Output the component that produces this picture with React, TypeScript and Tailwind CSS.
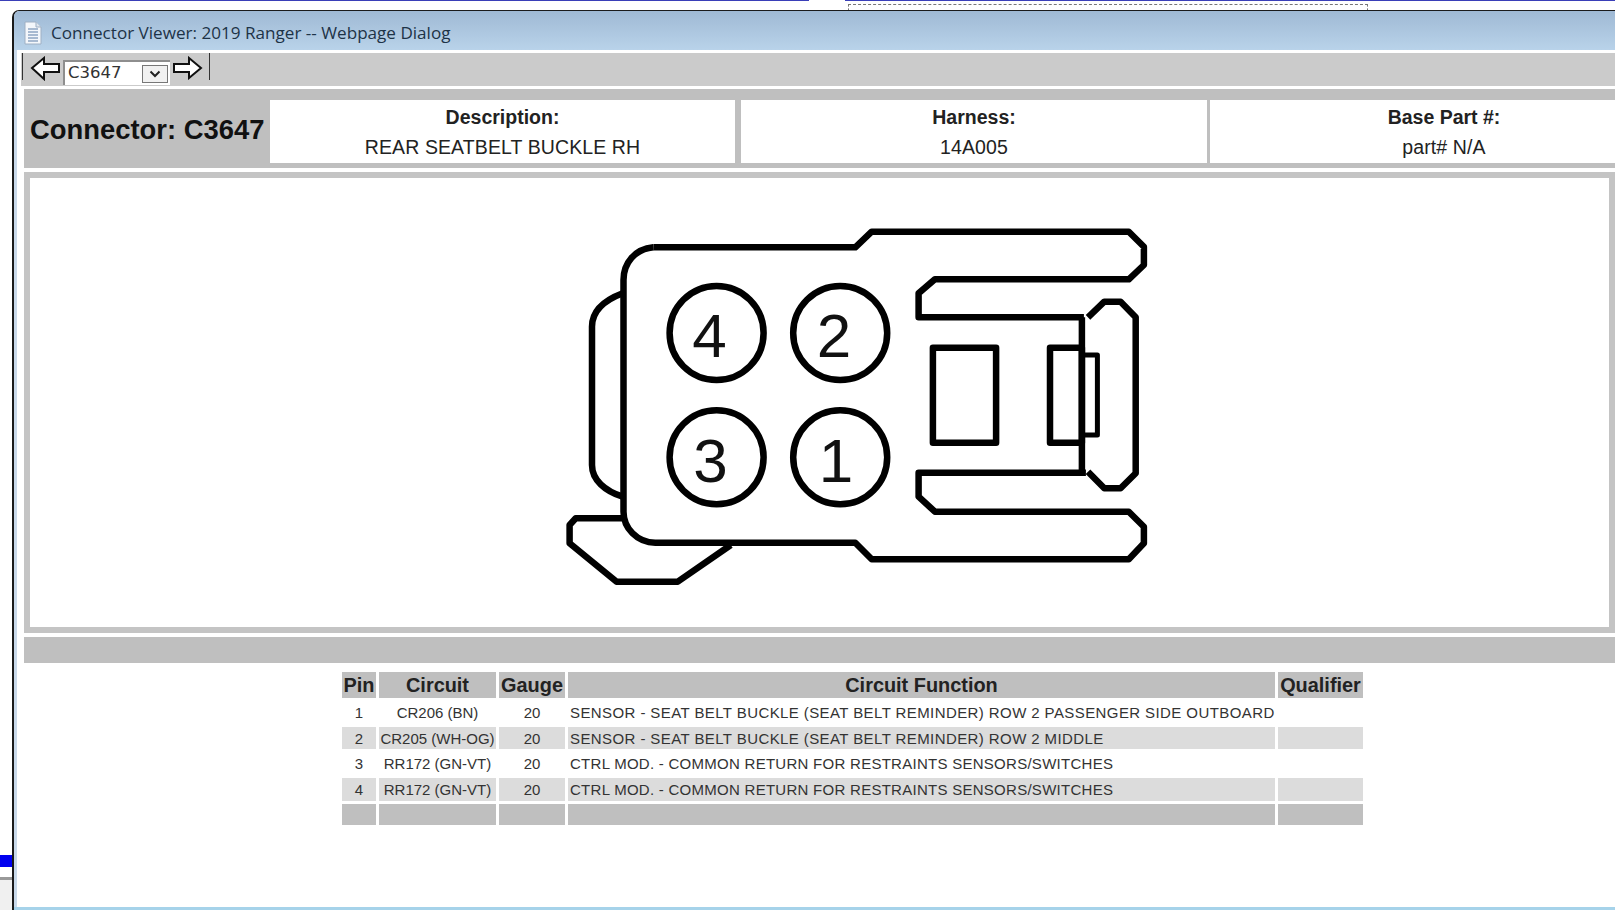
import React from 'react';

const rows = [
  ['1', 'CR206 (BN)', '20', 'SENSOR - SEAT BELT BUCKLE (SEAT BELT REMINDER) ROW 2 PASSENGER SIDE OUTBOARD'],
  ['2', 'CR205 (WH-OG)', '20', 'SENSOR - SEAT BELT BUCKLE (SEAT BELT REMINDER) ROW 2 MIDDLE'],
  ['3', 'RR172 (GN-VT)', '20', 'CTRL MOD. - COMMON RETURN FOR RESTRAINTS SENSORS/SWITCHES'],
  ['4', 'RR172 (GN-VT)', '20', 'CTRL MOD. - COMMON RETURN FOR RESTRAINTS SENSORS/SWITCHES'],
];

const InfoCell: React.FC<{ label: string; value: string; width: string }> = ({ label, value, width }) => (
  <div className={`${width} shrink-0 h-[63px] bg-white flex flex-col items-center justify-center text-[19.5px] leading-[30px] text-[#222]`}>
    <div className="font-bold">{label}</div>
    <div className="tracking-[0.1px]">{value}</div>
  </div>
);

const ConnectorDrawing: React.FC = () => (
  <svg width="640" height="390" viewBox="0 0 640 390" fill="none" stroke="#000" strokeWidth="6.5" strokeLinejoin="round">
    <path d="M114.3 37.3H316.3L332.7 21.7H589.8L604.9 36.7V55L589.8 69.3H395.9L379.6 83.3V107.3H544.9" />
    <path d="M114.3 37.3C96 39 84.5 53 84.5 70V301.7C84.5 318 98 332.7 116.3 332.7H316.3L332.7 349.3H589.8L604.9 333.3V316.7L589.8 301.7H395.9L379.6 286.7V262.7H546.9" />
    <path d="M542.9 107.3V262.7" />
    <path d="M549 107.3L565.3 91.7H581.6L596.7 107.3V263.3L581.6 278.3H565.3L549 261.7" />
    <rect x="393.9" y="137.7" width="63.2" height="95" />
    <rect x="511" y="137.7" width="31.9" height="95" />
    <rect x="542.9" y="145" width="15.5" height="80" strokeWidth="5" />
    <path d="M83.7 83.3C66 90 53 100 53 116.7V255C53 270 66 281 83.7 286.7" />
    <path d="M84.5 308.3H36.7L30.6 315V333.3L77.6 371.7H138.8L191.8 335" />
    <circle cx="177.6" cy="123" r="47" />
    <circle cx="301.2" cy="123" r="47" />
    <circle cx="177.6" cy="247.3" r="47" />
    <circle cx="301.2" cy="247.3" r="47" />
    <g fill="#111" stroke="none" fontSize="62" textAnchor="middle" style={{ fontFamily: '"Liberation Sans", sans-serif' }}>
      <text x="170.4" y="146.7">4</text>
      <text x="294.9" y="146.7">2</text>
      <text x="171.6" y="271.7">3</text>
      <text x="297" y="271.7">1</text>
    </g>
  </svg>
);

const App: React.FC = () => {
  return (
    <div className="relative w-[1615px] h-[910px] overflow-hidden bg-white font-['Liberation_Sans',sans-serif]">
      {/* stuff behind the dialog */}
      <div className="absolute left-0 top-0 w-[809px] h-px bg-[#3a3fb8]" />
      <div className="absolute left-[845px] right-0 top-0 h-px bg-[#3a3fb8]" />
      <div className="absolute left-[848px] top-[4px] w-[520px] h-[7px] border-t border-l border-r border-dashed border-[#777]" />
      <div className="absolute left-0 top-[855px] w-[12px] h-[12px] bg-[#0000f0]" />
      <div className="absolute left-0 top-[877px] w-[12px] h-[33px] bg-[#f0f0f0] border-t-[3px] border-[#999]" />

      {/* dialog window */}
      <div className="absolute left-[12px] top-[10px] w-[1603px] h-[900px] border-l-2 border-t border-[#1a1a1a] rounded-tl-[7px] overflow-hidden flex flex-col bg-white">
        <div className="h-[39px] shrink-0 bg-gradient-to-b from-[#9fb9d4] to-[#b9d3ea] flex items-center pl-[10px] pt-[4px] gap-[9px]">
          <svg width="18" height="24" viewBox="0 0 18 24" className="shrink-0">
            <path d="M1 1H12L17 6V23H1Z" fill="#f4f7fb" stroke="#9fb0c4" />
            <path d="M12 1V6H17" fill="#dfe6ee" stroke="#9fb0c4" />
            <path d="M4 8H14M4 11H14M4 14H14M4 17H14M4 20H14" stroke="#5d7fa8" strokeWidth="1.2" />
          </svg>
          <span className="text-[17.1px] text-[#1d3347] font-['Open_Sans',sans-serif] whitespace-nowrap">Connector Viewer: 2019 Ranger -- Webpage Dialog</span>
        </div>

        <div className="flex-1 flex min-h-0">
          <div className="w-[3px] shrink-0 bg-[#c9d9ea]" />
          <div className="flex-1 min-w-0 flex flex-col">
            {/* toolbar */}
            <div className="mt-[3px] ml-[4px] h-[33px] shrink-0 bg-[#cbcbcb] flex items-start">
              <div className="w-px h-[27px] bg-[#333] ml-px" />
              <svg width="30" height="25" viewBox="0 0 30 25" className="ml-[7px] mt-[3px] shrink-0" fill="#fff" stroke="#111" strokeWidth="2">
                <path d="M2 12L14 2V8H29V16H14V23Z" />
              </svg>
              <div className="ml-[3px] mt-[7px] w-[107px] h-[25px] bg-white border-t-2 border-l-2 border-[#8e8e8e] flex items-start relative">
                <span className="pl-[3px] text-[16.5px] leading-[22px] text-[#333] font-['DejaVu_Sans',sans-serif]">C3647</span>
                <div className="absolute left-[77px] top-[3px] w-[26px] h-[18px] border border-[#777] bg-[#f1f1f1] flex items-center justify-center">
                  <svg width="12" height="8" viewBox="0 0 12 8" fill="none" stroke="#222" strokeWidth="2">
                    <path d="M1.5 1.5L6 6L10.5 1.5" />
                  </svg>
                </div>
              </div>
              <svg width="30" height="24" viewBox="0 0 30 24" className="ml-[3px] mt-[3px] shrink-0" fill="#fff" stroke="#111" strokeWidth="2">
                <path d="M28 12L16 2V8H1V16H16V22Z" />
              </svg>
              <div className="w-px h-[27px] bg-[#333] ml-[6px]" />
            </div>

            {/* connector header */}
            <div className="mt-[3px] ml-[7px] h-[79px] shrink-0 bg-[#bfbfbf] flex items-start pt-[11px]">
              <div className="w-[246px] shrink-0 h-[60px] pl-[6px] flex items-center font-bold text-[27.4px] text-[#111] whitespace-nowrap">
                Connector: C3647
              </div>
              <InfoCell label="Description:" value="REAR SEATBELT BUCKLE RH" width="w-[465px] mr-[6px]" />
              <InfoCell label="Harness:" value="14A005" width="w-[466px] mr-[3px]" />
              <InfoCell label="Base Part #:" value="part# N/A" width="w-[468px]" />
            </div>

            {/* drawing */}
            <div className="mt-[4px] ml-[7px] h-[461px] shrink-0 border-[6px] border-[#c4c4c4] bg-white pl-[509px] pt-[32px]">
              <ConnectorDrawing />
            </div>

            <div className="mt-[4px] ml-[7px] h-[26px] shrink-0 bg-[#bfbfbf]" />

            {/* pin table */}
            <table className="mt-[6px] ml-[322px] w-[1025px] table-fixed border-separate border-spacing-[3px] text-[#333]">
              <colgroup>
                <col className="w-[34px]" />
                <col className="w-[117px]" />
                <col className="w-[66px]" />
                <col className="w-[707px]" />
                <col className="w-[85px]" />
              </colgroup>
              <thead>
                <tr className="h-[26px]">
                  {['Pin', 'Circuit', 'Gauge', 'Circuit Function', 'Qualifier'].map((h) => (
                    <th key={h} className="bg-[#bfbfbf] p-0 text-[19.9px] leading-[26px] font-bold text-center text-[#222] whitespace-nowrap">{h}</th>
                  ))}
                </tr>
              </thead>
              <tbody className="text-[15px] leading-[21.7px]">
                {rows.map((r, i) => (
                  <tr key={r[0]} className="h-[22.7px]">
                    <td className={`p-0 pt-px text-center ${i % 2 ? 'bg-[#dcdcdc]' : ''}`}>{r[0]}</td>
                    <td className={`p-0 pt-px text-center whitespace-nowrap ${i % 2 ? 'bg-[#dcdcdc]' : ''}`}>{r[1]}</td>
                    <td className={`p-0 pt-px text-center ${i % 2 ? 'bg-[#dcdcdc]' : ''}`}>{r[2]}</td>
                    <td className={`p-0 pt-px pl-[2px] whitespace-nowrap ${i < 2 ? 'tracking-[0.41px]' : 'tracking-[0.27px]'} ${i % 2 ? 'bg-[#dcdcdc]' : ''}`}>{r[3]}</td>
                    <td className={`p-0 ${i % 2 ? 'bg-[#dcdcdc]' : ''}`}></td>
                  </tr>
                ))}
                <tr className="h-[21px]">
                  <td className="p-0 bg-[#bfbfbf]"></td>
                  <td className="p-0 bg-[#bfbfbf]"></td>
                  <td className="p-0 bg-[#bfbfbf]"></td>
                  <td className="p-0 bg-[#bfbfbf]"></td>
                  <td className="p-0 bg-[#bfbfbf]"></td>
                </tr>
              </tbody>
            </table>
          </div>
        </div>
        <div className="h-[3px] shrink-0 bg-[#a6d3ea]" />
      </div>
    </div>
  );
};

export default App;
